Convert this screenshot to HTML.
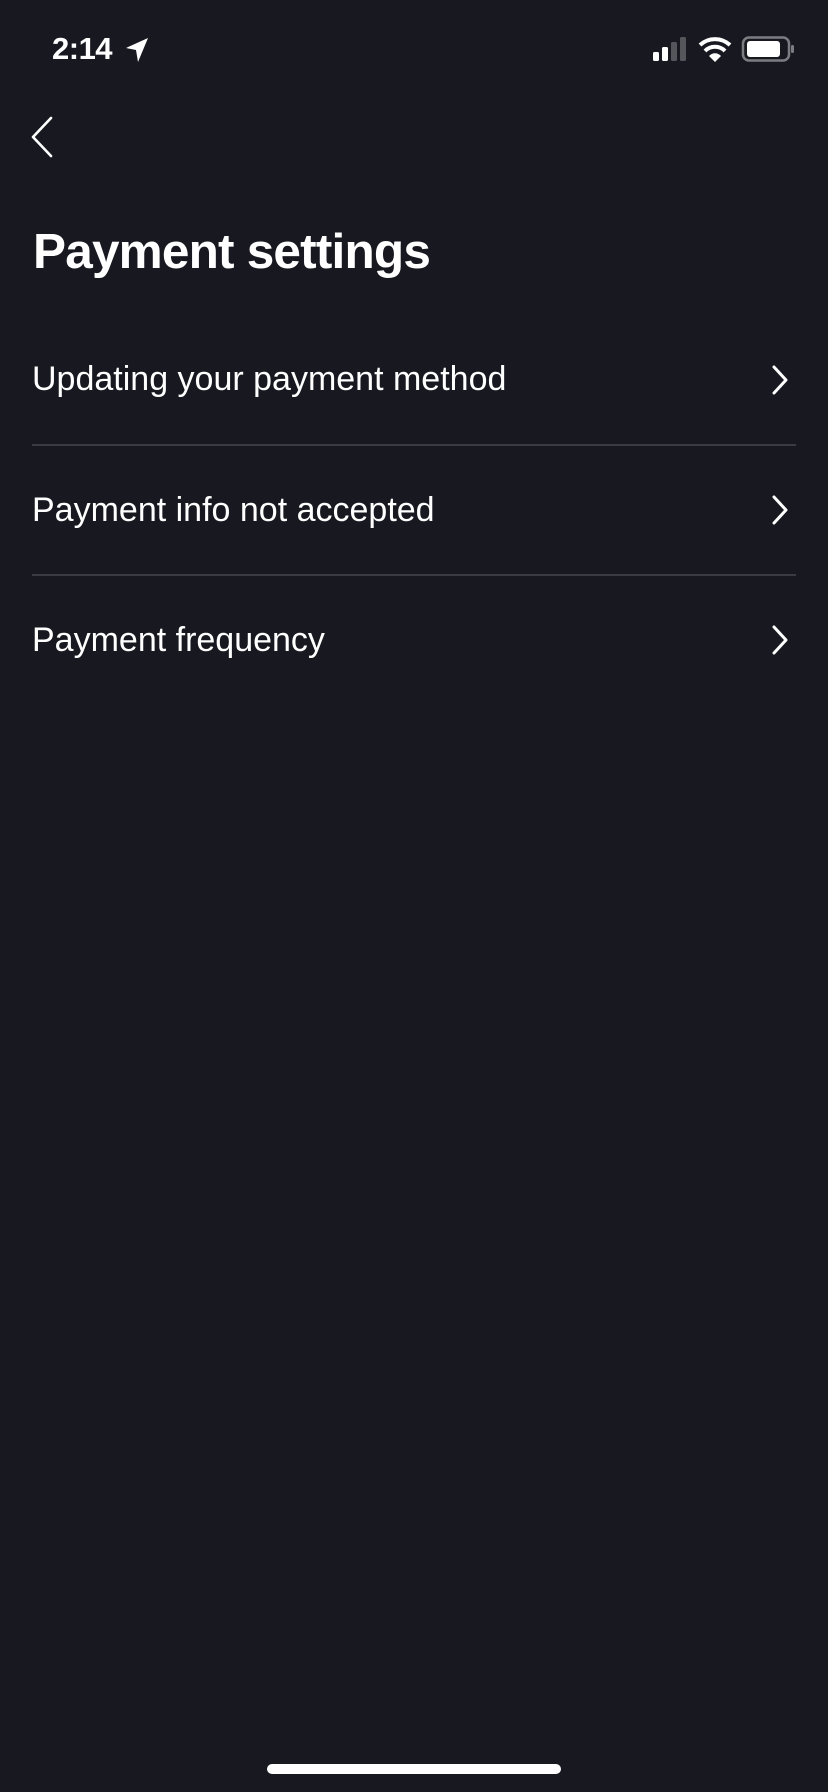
<!DOCTYPE html>
<html><head><meta charset="utf-8"><style>
html,body{margin:0;padding:0;background:#181820;}
body{width:828px;height:1792px;position:relative;overflow:hidden;font-family:"Liberation Sans",sans-serif;color:#fff;}
.abs{position:absolute;}
.row{position:absolute;left:32px;font-size:34px;line-height:34px;white-space:nowrap;}
.div{position:absolute;left:32px;width:764px;height:2px;background:#3a3b43;}
</style></head><body>
<div class="abs" style="left:52px;top:32px;font-size:31px;font-weight:bold;line-height:34px;letter-spacing:-0.5px">2:14</div>
<svg class="abs" style="left:124px;top:36px" width="26" height="28" viewBox="0 0 26 28"><path d="M24 2 L2 12 L12 14 L14 26 Z" fill="#fff"/></svg>
<svg class="abs" style="left:650px;top:36px" width="150" height="28" viewBox="0 0 150 28">
<rect x="3" y="16" width="6" height="9" rx="1.5" fill="#fff"/>
<rect x="12" y="11" width="6" height="14" rx="1.5" fill="#fff"/>
<rect x="21" y="6" width="6" height="19" rx="1.5" fill="#55565c"/>
<rect x="30" y="1" width="6" height="24" rx="1.5" fill="#55565c"/>
<path d="M50 9 A22 22 0 0 1 80 9" stroke="#fff" stroke-width="4" fill="none"/>
<path d="M55 15 A14 14 0 0 1 75 15" stroke="#fff" stroke-width="4" fill="none"/>
<path d="M59 20 L65 26 L71 20 A8 8 0 0 0 59 20Z" fill="#fff"/>
<rect x="93" y="1.5" width="46" height="23" rx="6" stroke="#7c7d82" stroke-width="2.5" fill="none"/>
<rect x="97" y="5" width="33" height="16" rx="3" fill="#fff"/>
<rect x="141" y="9" width="3" height="8" rx="1.5" fill="#7c7d82"/>
</svg>
<svg class="abs" style="left:28px;top:116px" width="28" height="42" viewBox="0 0 28 42"><path d="M23 2 L5 21 L23 40" stroke="#fff" stroke-width="2.6" fill="none" stroke-linecap="round" stroke-linejoin="round"/></svg>
<div class="abs" style="left:33px;top:224px;font-size:49.5px;font-weight:bold;line-height:56px;letter-spacing:-0.8px">Payment settings</div>
<div class="row" style="top:362px">Updating your payment method</div>
<div class="div" style="top:444px"></div>
<div class="row" style="top:493px">Payment info not accepted</div>
<div class="div" style="top:574px"></div>
<div class="row" style="top:623px">Payment frequency</div>
<svg class="abs" style="left:768px;top:364px" width="24" height="32" viewBox="0 0 24 32"><path d="M6 3 L18 16 L6 29" stroke="#fff" stroke-width="3" fill="none" stroke-linecap="round" stroke-linejoin="round"/></svg>
<svg class="abs" style="left:768px;top:494px" width="24" height="32" viewBox="0 0 24 32"><path d="M6 3 L18 16 L6 29" stroke="#fff" stroke-width="3" fill="none" stroke-linecap="round" stroke-linejoin="round"/></svg>
<svg class="abs" style="left:768px;top:624px" width="24" height="32" viewBox="0 0 24 32"><path d="M6 3 L18 16 L6 29" stroke="#fff" stroke-width="3" fill="none" stroke-linecap="round" stroke-linejoin="round"/></svg>
<div class="abs" style="left:267px;top:1764px;width:294px;height:10px;border-radius:5px;background:#fff"></div>
</body></html>
